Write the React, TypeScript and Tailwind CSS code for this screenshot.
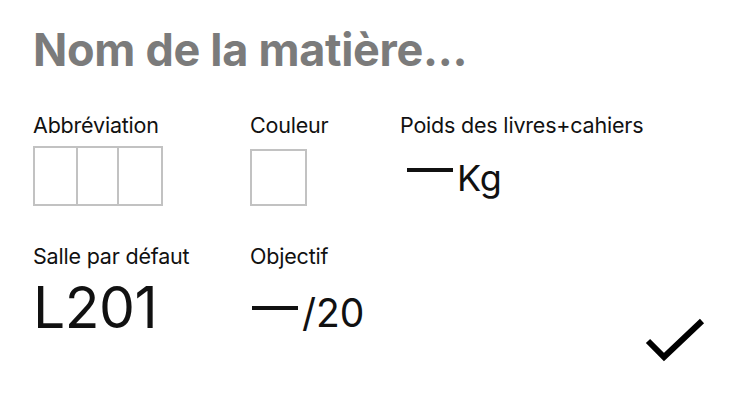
export default function App() {
  const font = { fontFamily: 'Inter, "Open Sans", sans-serif' };
  return (
    <div className="w-[752px] h-[409px] bg-white relative" style={font}>
      <div className="pl-[33px] pt-[20px] flex flex-col">
        <div className="text-[45px] leading-[60px] font-bold text-[#7b7b7b] tracking-[-0.3px]">Nom de la matière...</div>
        <div className="mt-[33px] flex">
          <div className="w-[217px] flex flex-col">
            <div className="text-[21.5px] leading-[24px] text-[#111] tracking-[-0.2px]">Abbréviation</div>
            <div className="mt-[9px] flex h-[60px] w-[130px] border-2 border-[#c2c2c2]">
              <div className="w-[43px] border-r-2 border-[#c2c2c2]" />
              <div className="w-[41px] border-r-2 border-[#c2c2c2]" />
              <div className="flex-1" />
            </div>
          </div>
          <div className="w-[150px] flex flex-col">
            <div className="text-[21.5px] leading-[24px] text-[#111] tracking-[-0.2px]">Couleur</div>
            <div className="mt-[12px] w-[57px] h-[57px] border-2 border-[#c2c2c2]" />
          </div>
          <div className="flex flex-col">
            <div className="text-[21.5px] leading-[24px] text-[#111] tracking-[-0.2px]">Poids des livres+cahiers</div>
            <div className="mt-[19px] flex items-start pl-[7px] text-[36px] leading-[44px] text-[#111]">
              <span className="inline-block w-[46px] h-[4px] bg-[#111] mt-[12px]" />
              <span className="ml-[4px]">Kg</span>
            </div>
          </div>
        </div>
        <div className="mt-[38px] flex">
          <div className="w-[217px] flex flex-col">
            <div className="text-[21.5px] leading-[24px] text-[#111] tracking-[-0.2px]">Salle par défaut</div>
            <div className="mt-[7px] text-[57px] leading-[66px] text-[#111] tracking-[-0.5px]">L201</div>
          </div>
          <div className="flex flex-col">
            <div className="text-[21.5px] leading-[24px] text-[#111] tracking-[-0.2px]">Objectif</div>
            <div className="mt-[21px] flex items-start pl-[2px] text-[39px] leading-[48px] text-[#111]">
              <span className="inline-block w-[46px] h-[4px] bg-[#111] mt-[17px]" />
              <span className="ml-[4px]">/20</span>
            </div>
          </div>
        </div>
      </div>
      <svg className="absolute left-[644px] top-[314px]" width="62" height="52" viewBox="0 0 62 52">
        <path d="M4 27 L20 43 L58 7" fill="none" stroke="#000" strokeWidth="6" />
      </svg>
    </div>
  );
}
